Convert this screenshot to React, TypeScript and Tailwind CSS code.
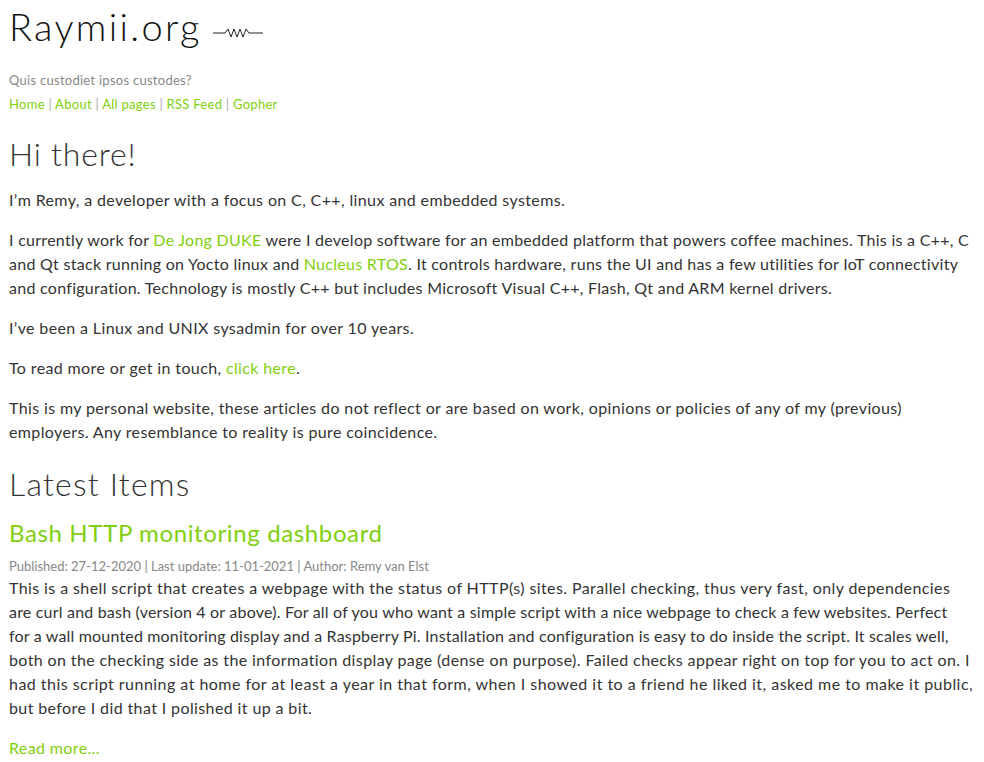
const Squiggle = () => (
    <svg width="50" height="12" viewBox="0 0 50 12" className="ml-[11px] mt-[14px]" fill="none" stroke="#222" strokeWidth="1">
        <path d="M0 6 H12 L15 2 L18 10 L21 2 L24 10 L27 2 L30 10 L33 2 L36 6 H50" />
    </svg>
)

// summary text broken the way the original site wraps it
const summary: [string, string][] = [
    ["This is a shell script that creates a webpage with the status of HTTP(s) sites. Parallel checking, thus very fast, only dependencies", "tracking-[0.4px]"],
    ["are curl and bash (version 4 or above). For all of you who want a simple script with a nice webpage to check a few websites. Perfect", "tracking-[0.195px]"],
    ["for a wall mounted monitoring display and a Raspberry Pi. Installation and configuration is easy to do inside the script. It scales well,", "tracking-[0.175px]"],
    ["both on the checking side as the information display page (dense on purpose). Failed checks appear right on top for you to act on. I", "tracking-[0.385px]"],
    ["had this script running at home for at least a year in that form, when I showed it to a friend he liked it, asked me to make it public,", "tracking-[0.465px]"],
    ["but before I did that I polished it up a bit.", "tracking-[0.385px]"],
]

const App = () => {
    const link = "text-[#7fcf0d]"
    return (
        <div className="min-h-[762px] bg-white px-[9px] text-[#333] font-['Lato',sans-serif] tracking-[0.37px]">
            <header className="pt-[2px]">
                <div className="flex items-center">
                    <h1 className="text-[38px] leading-[48px] text-[#111] font-light tracking-[2.3px]">Raymii.org</h1>
                    <Squiggle />
                </div>
                <p className="mt-[20px] text-[13px] leading-[20px] text-[#888] tracking-[0.27px]">Quis custodiet ipsos custodes?</p>
                <nav className="mt-[4px] text-[13px] leading-[20px] text-[#aaa] tracking-[0.28px]">
                    <a className={link}>Home</a> | <a className={link}>About</a> | <a className={link}>All pages</a> | <a className={link}>RSS Feed</a> | <a className={link}>Gopher</a>
                </nav>
            </header>

            <main>
                <h2 className="mt-[20px] text-[32px] leading-[40px] font-light tracking-[0.8px]">Hi there!</h2>
                <div className="mt-[14px] text-[16px] leading-[24px] space-y-[16px]">
                    <p>I’m Remy, a developer with a focus on C, C++, linux and embedded systems.</p>
                    <p className="tracking-[0.28px]">
                        I currently work for <a className={link}>De Jong DUKE</a> were I develop software for an embedded platform that powers coffee machines. This is a C++, C and Qt stack running on Yocto linux and <a className={link}>Nucleus RTOS</a>. It controls hardware, runs the UI and has a few utilities for IoT connectivity and configuration. Technology is mostly C++ but includes Microsoft Visual C++, Flash, Qt and ARM kernel drivers.
                    </p>
                    <p>I’ve been a Linux and UNIX sysadmin for over 10 years.</p>
                    <p>To read more or get in touch, <a className={link}>click here</a>.</p>
                    <p>This is my personal website, these articles do not reflect or are based on work, opinions or policies of any of my (previous) employers. Any resemblance to reality is pure coincidence.</p>
                </div>

                <h2 className="mt-[20px] text-[32px] leading-[40px] font-light tracking-[1.2px]">Latest Items</h2>
                <h3 className={`mt-[13px] text-[24px] leading-[32px] tracking-[0.63px] ${link}`}>Bash HTTP monitoring dashboard</h3>
                <p className="mt-[7px] text-[13px] leading-[20px] text-[#888] tracking-normal">Published: 27-12-2020 | Last update: 11-01-2021 | Author: Remy van Elst</p>
                <p className="text-[16px] leading-[24px]">
                    {summary.map(([line, track], i) => (
                        <span key={i} className={`block whitespace-nowrap ${track}`}>{line}</span>
                    ))}
                </p>
                <p className={`mt-[16px] text-[16px] leading-[24px] ${link}`}>Read more...</p>
            </main>
        </div>
    )
}

export default App
